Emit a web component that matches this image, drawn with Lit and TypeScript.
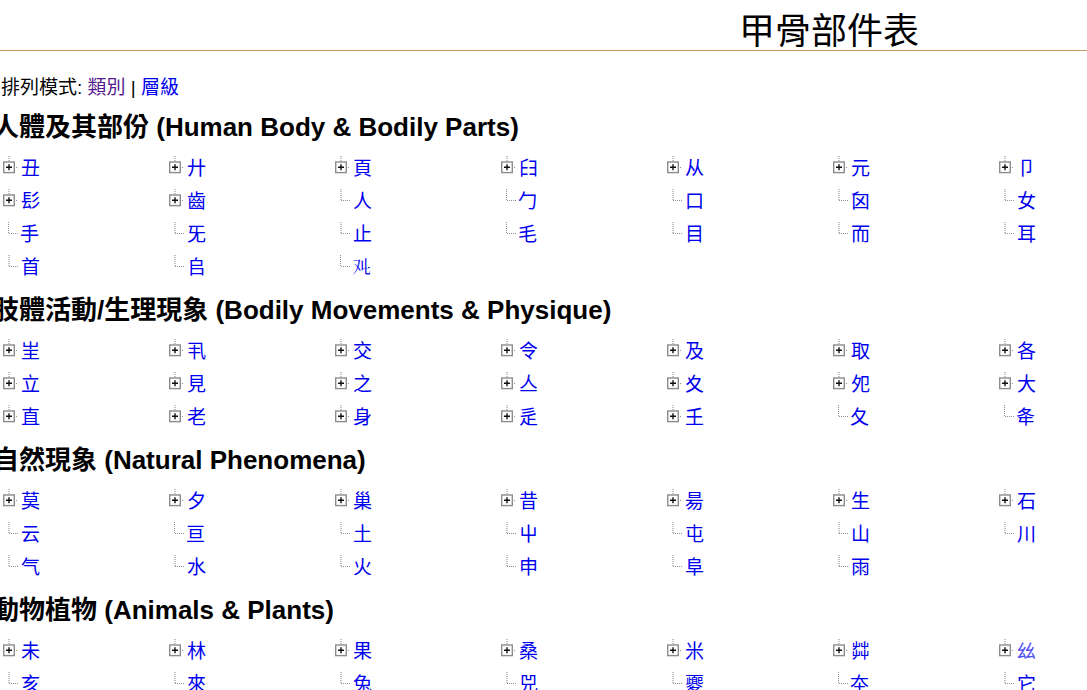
import { LitElement, html, css, svg } from "lit";
import { customElement, property } from "lit/decorators.js";
import { classMap } from "lit/directives/class-map.js";

type Kind = "branch" | "leaf" | "wide";

interface Entry {
  char: string;
  kind: Kind;
}

interface Section {
  title: string;
  entries: Entry[];
}

// "+" marks an expandable component, "-" a leaf, "=" a leaf with a long connector
const parse = (source: string): Entry[] =>
  source.split(" ").map((token) => {
    const kind: Kind = token[0] === "+" ? "branch" : token[0] === "=" ? "wide" : "leaf";
    return { kind, char: token.slice(1) };
  });

const LIGHT = new Set(["𢆶"]);

const SECTIONS: Section[] = [
  {
    title: "人體及其部份 (Human Body & Bodily Parts)",
    entries: parse(
      "+丑 +廾 +頁 +𦥑 +从 +元 +卩 +髟 +齒 -人 =勹 -口 -囟 -女 =手 -旡 -止 =毛 -目 -而 -耳 -首 -𠂤 =𠬜"
    ),
  },
  {
    title: "肢體活動/生理現象 (Bodily Movements & Physique)",
    entries: parse(
      "+㞷 +丮 +交 +令 +及 +取 +各 +立 +見 +之 +亼 +夊 +夗 +大 +直 +老 +身 +辵 +𡈼 =夂 =夅"
    ),
  },
  {
    title: "自然現象 (Natural Phenomena)",
    entries: parse(
      "+莫 +夕 +巢 +昔 +昜 +生 +石 -云 =亘 -土 -屮 -屯 -山 -川 -气 -水 -火 -申 -阜 -雨"
    ),
  },
  {
    title: "動物植物 (Animals & Plants)",
    entries: parse("+未 +林 +果 +桑 +米 +茻 +𢆶 -亥 -來 -兔 -兕 -夒 =夲 -它"),
  },
];

@customElement("tree-mark")
class TreeMark extends LitElement {
  @property() kind: Kind = "leaf";

  static styles = css`
    :host {
      display: block;
      flex: none;
    }
    .mark {
      display: block;
    }
    .dots {
      stroke: #909090;
      stroke-width: 1;
      stroke-dasharray: 1 1;
      fill: none;
    }
    .soft {
      stroke: #c0c0c0;
      stroke-width: 2;
      stroke-dasharray: 1 1;
      fill: none;
    }
    .box {
      fill: #fff;
      stroke: #8c8c8c;
      stroke-width: 1.4;
    }
    .plus {
      stroke: #111;
      stroke-width: 1.4;
    }
  `;

  render() {
    if (this.kind === "branch") {
      return html`<svg class="mark" width="21" height="33" viewBox="0 0 21 33" aria-hidden="true">
        ${svg`<path class="soft" d="M9 4V9"/>
        <path class="dots" d="M16 15.5H18"/>
        <rect class="box" x="3.7" y="10" width="10.6" height="10.6"/>
        <path class="plus" d="M6 15.3H12M9 12.3V18.3"/>`}
      </svg>`;
    }
    if (this.kind === "wide") {
      return html`<svg class="mark" width="20" height="33" viewBox="0 0 20 33" aria-hidden="true">
        ${svg`<path class="dots" d="M8.5 4V16M9 15.5H19"/>`}
      </svg>`;
    }
    return html`<svg class="mark" width="21" height="33" viewBox="0 0 21 33" aria-hidden="true">
      ${svg`<path class="soft" d="M9 4V15"/><path class="dots" d="M9 15.5H18"/>`}
    </svg>`;
  }
}

@customElement("app-root")
class AppRoot extends LitElement {
  static styles = css`
    :host {
      display: block;
      overflow: hidden;
      background: #fff;
      color: #000;
      font-family: "Liberation Sans", "Noto Sans CJK TC", sans-serif;
      font-size: 19px;
    }
    .title {
      margin: 0;
      padding: 14px 168px 0 0;
      border-bottom: 1px solid #cc9966;
      font-size: 36px;
      font-weight: 400;
      line-height: 36px;
      text-align: right;
    }
    .modes {
      padding: 24px 0 0 1px;
      line-height: 26px;
    }
    .link {
      color: #0000ee;
      text-decoration: none;
    }
    .visited {
      color: #551a8b;
    }
    .light {
      color: #5050f2;
    }
    .heading {
      margin: 0 0 0 -7px;
      padding: 8px 0 7px;
      font-size: 26px;
      line-height: 36px;
    }
    .grid {
      display: grid;
      grid-template-columns: repeat(6, 1fr) 91px;
      margin: 0;
      padding: 0;
      list-style: none;
    }
    .entry {
      display: flex;
      align-items: center;
      height: 33px;
      line-height: 33px;
    }
  `;

  render() {
    return html`
      <h1 class="title">甲骨部件表</h1>
      <main>
        <nav class="modes">
          排列模式: <a class="link visited" href="#category">類別</a> |
          <a class="link" href="#level">層級</a>
        </nav>
        ${SECTIONS.map(
          (section) => html`
            <section>
              <h2 class="heading">${section.title}</h2>
              <ul class="grid">
                ${section.entries.map(
                  (entry) => html`<li class="entry">
                    <tree-mark .kind=${entry.kind}></tree-mark>
                    <a
                      class=${classMap({ link: true, light: LIGHT.has(entry.char) })}
                      href="#${entry.char}"
                      >${entry.char}</a
                    >
                  </li>`
                )}
              </ul>
            </section>
          `
        )}
      </main>
    `;
  }
}
